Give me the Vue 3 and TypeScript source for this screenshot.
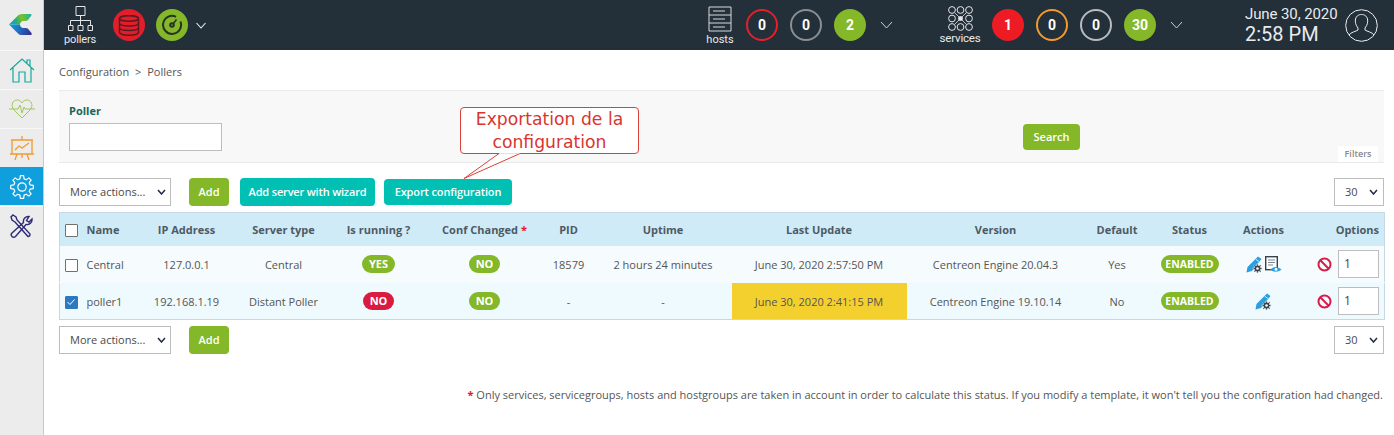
<script setup lang="ts">
interface Row {
  name: string; ip: string; type: string; running: boolean; pid: string; uptime: string;
  update: string; version: string; isDefault: string; checked: boolean; stale: boolean; preview: boolean;
}
const rows: Row[] = [
  { name: 'Central', ip: '127.0.0.1', type: 'Central', running: true, pid: '18579', uptime: '2 hours 24 minutes', update: 'June 30, 2020 2:57:50 PM', version: 'Centreon Engine 20.04.3', isDefault: 'Yes', checked: false, stale: false, preview: true },
  { name: 'poller1', ip: '192.168.1.19', type: 'Distant Poller', running: false, pid: '-', uptime: '-', update: 'June 30, 2020 2:41:15 PM', version: 'Centreon Engine 19.10.14', isDefault: 'No', checked: true, stale: true, preview: false },
]
const cols = [27, 50, 100, 94, 96, 116, 52, 137, 175, 178, 65, 80, 68, 87]
const hostPills = [
  { t: '0', c: 'ring red' }, { t: '0', c: 'ring grey' }, { t: '2', c: 'fill lime' },
]
const servicePills = [
  { t: '1', c: 'fill redf' }, { t: '0', c: 'ring orange' }, { t: '0', c: 'ring light' }, { t: '30', c: 'fill lime' },
]
function gear(cx: number, cy: number, outer: number, inner: number, teeth: number): string {
  const step = (Math.PI * 2) / teeth
  const parts: string[] = []
  for (let i = 0; i < teeth; i++) {
    const a = i * step
    const pts: [number, number][] = [
      [inner, a - step * 0.32], [outer, a - step * 0.18], [outer, a + step * 0.18], [inner, a + step * 0.32],
    ]
    for (const [r, t] of pts) {
      parts.push(`${parts.length ? 'L' : 'M'}${(cx + r * Math.cos(t)).toFixed(2)} ${(cy + r * Math.sin(t)).toFixed(2)}`)
    }
  }
  return parts.join(' ') + ' Z'
}
const navGear = gear(12, 12, 11.4, 8.4, 8)
const smallGear = gear(11.5, 12.5, 4.6, 3.2, 8)
const serviceDots: [number, number][] = []
for (const y of [4, 12.5, 21]) for (const x of [4, 12.5, 21]) if (!(x === 12.5 && y === 12.5)) serviceDots.push([x, y])
</script>

<template>
  <div class="app">
    <aside class="side">
      <div class="logo">
        <svg width="24" height="22" viewBox="0 0 24 22">
          <defs>
            <linearGradient id="logoTop" gradientUnits="userSpaceOnUse" x1="23" y1="2" x2="1" y2="9">
              <stop offset="0" stop-color="#10b4a8" />
              <stop offset="0.45" stop-color="#7fc023" />
              <stop offset="0.72" stop-color="#27b07a" />
              <stop offset="1" stop-color="#0f9fdc" />
            </linearGradient>
            <linearGradient id="logoBottom" gradientUnits="userSpaceOnUse" x1="1" y1="11" x2="22" y2="20">
              <stop offset="0" stop-color="#0f9fdc" />
              <stop offset="0.45" stop-color="#1f6fc0" />
              <stop offset="1" stop-color="#3a2d8c" />
            </linearGradient>
          </defs>
          <path d="M0 10.5 L9 1.5 Q10 0 13 0 L21 0 Q23.5 0 22 2 L19 6 Q18 7 16 7 L14 7 Q11 8 11 10.5 Z" fill="url(#logoTop)" />
          <path d="M0 10.5 L11 10.5 Q11 13 14 14 L17 14 Q19 14 20 16 L22.5 19 Q23.5 21 21 21 L13 21 Q10 21 9 19.5 Z" fill="url(#logoBottom)" />
        </svg>
      </div>
      <div class="nav">
        <svg width="26" height="26" viewBox="0 0 26 26" fill="none" stroke="#17a89d" stroke-width="1.2">
          <path d="M1 13 L13 2 L25 13 M4 11 V25 H10 V15 H16 V25 H22 V11 M18 6 V3 H21 V9" />
        </svg>
      </div>
      <div class="nav">
        <svg width="26" height="22" viewBox="0 0 26 22" fill="none" stroke="#a3c65a" stroke-width="1">
          <path d="M13 20 L5 12 C1 7 4 2 8 2 C10 2 12 3 13 5 C14 3 16 2 18 2 C22 2 25 7 21 12 Z M0 11 H9 L11 7 L13 15 L15 9 L16 11 H26" />
        </svg>
      </div>
      <div class="nav">
        <svg width="24" height="26" viewBox="0 0 24 26" fill="none" stroke="#f29a2e" stroke-width="1.3">
          <path d="M1 5 H23 M2 5 V19 H22 V5 M12 5 V1 M0 19 H24 M7 19 L5 25 M17 19 L19 25 M12 19 V23 M5 15 L9 11 L12 13 L19 8" />
        </svg>
      </div>
      <div class="nav active">
        <svg width="24" height="24" viewBox="0 0 24 24" fill="none" stroke="#fff" stroke-width="1.2">
          <path :d="navGear" stroke-linejoin="round" />
          <circle cx="12" cy="12" r="4.2" />
        </svg>
      </div>
      <div class="nav">
        <svg width="24" height="24" viewBox="0 0 24 24" fill="none" stroke="#2a2a78" stroke-width="1.4">
          <path d="M3 1 L6 3 L7 6 L20 20 A2 2 0 0 1 18 22.5 L5 8 L2 6 L1 3 Z" />
          <path d="M22 5 L19 8 L16.5 6.5 L19 2.5 A5 5 0 0 0 13.5 8.5 L2 19 A2.4 2.4 0 0 0 5.5 22.5 L16 10.5 A5 5 0 0 0 22 5 Z" />
        </svg>
      </div>
    </aside>

    <div class="content">
      <header class="top">
        <div class="group-left">
          <div class="labelled pollers">
            <svg width="25" height="26" viewBox="0 0 25 26" fill="none" stroke="#e4e6e8" stroke-width="1">
              <path d="M8 0.5 H17 V9.5 H8 Z M12.5 9.5 V14.5 M2.5 14.5 H22.5 V19 M2.5 14.5 V19 M12.5 14.5 V19 M0.5 19.5 H5 V24.5 H0.5 Z M10 19.5 H15 V24.5 H10 Z M20 19.5 H24.5 V24.5 H20 Z" />
            </svg>
            <span>pollers</span>
          </div>
          <div class="round db">
            <svg width="22" height="21" viewBox="0 0 22 21" fill="none" stroke="#5a1a22" stroke-width="1.5">
              <ellipse cx="11" cy="3.5" rx="9.5" ry="2.8" />
              <path d="M1.5 3.5 V17 C1.5 19 6 20.2 11 20.2 C16 20.2 20.5 19 20.5 17 V3.5 M1.5 8 C1.5 10 6 11 11 11 C16 11 20.5 10 20.5 8 M1.5 12.5 C1.5 14.5 6 15.5 11 15.5 C16 15.5 20.5 14.5 20.5 12.5" />
            </svg>
          </div>
          <div class="round gauge">
            <svg width="22" height="22" viewBox="0 0 22 22" fill="none" stroke="#263226" stroke-width="2">
              <path d="M15 2.8 A9 9 0 1 0 19.4 7.5" />
              <circle cx="11" cy="11" r="1.8" />
              <path d="M12 10 L15.5 5.5" stroke-width="1.5" />
            </svg>
          </div>
          <svg class="chev first-chev" width="10" height="7" viewBox="0 0 10 7" fill="none" stroke="#f0f1f2" stroke-width="1.1"><path d="M0.5 1 L5 6 L9.5 1" /></svg>
        </div>

        <div class="group-hosts">
          <div class="labelled hosts">
            <svg width="24" height="26" viewBox="0 0 24 26" fill="none" stroke="#d8dadc" stroke-width="1">
              <path d="M1 1 H23 V25 H1 Z M1 9 H23 M1 17 H23 M5 5 H17 M5 13 H17 M5 21 H17" />
            </svg>
            <span>hosts</span>
          </div>
          <div class="pills">
            <span v-for="(p, i) in hostPills" :key="i" class="pill" :class="p.c">{{ p.t }}</span>
          </div>
          <svg class="chev" width="13" height="8" viewBox="0 0 13 8" fill="none" stroke="#cfd2d4" stroke-width="1"><path d="M1 1 L6.5 7 L12 1" /></svg>
        </div>

        <div class="group-services">
          <div class="labelled services">
            <svg width="25" height="25" viewBox="0 0 25 25" fill="none" stroke="#e4e6e8" stroke-width="1">
              <circle v-for="(d, i) in serviceDots" :key="i" :cx="d[0]" :cy="d[1]" r="3.4" />
              <circle cx="12.5" cy="12.5" r="2" fill="#e4e6e8" />
              <path d="M7 7 L18 18 M18 7 L7 18" stroke-width="0.8" />
            </svg>
            <span>services</span>
          </div>
          <div class="pills">
            <span v-for="(p, i) in servicePills" :key="i" class="pill" :class="p.c">{{ p.t }}</span>
          </div>
          <svg class="chev" width="13" height="8" viewBox="0 0 13 8" fill="none" stroke="#cfd2d4" stroke-width="1"><path d="M1 1 L6.5 7 L12 1" /></svg>
        </div>

        <div class="clock">
          <div class="date">June 30, 2020</div>
          <div class="time">2:58 PM</div>
        </div>
        <svg class="user" width="33" height="33" viewBox="0 0 33 33" fill="none" stroke="#eceeef" stroke-width="1">
          <circle cx="16.5" cy="16.5" r="15.8" />
          <path d="M4 26 C6 23 11 22.5 13 21 V19 C10.5 16 10 13 10.5 10 C11.5 6.5 14 5.5 16.5 5.5 C19 5.5 21.5 6.5 22.5 10 C23 13 22.5 16 20 19 V21 C22 22.5 27 23 29 26" />
        </svg>
      </header>

      <main class="page">
        <div class="crumb">Configuration <span class="gt">&gt;</span> Pollers</div>

        <section class="filters">
          <div class="field">
            <label>Poller</label>
            <div class="textbox"></div>
          </div>
          <button class="btn search">Search</button>
          <span class="filters-tab">Filters</span>
        </section>

        <div class="toolbar first">
          <div class="select wide"><span>More actions...</span><svg width="9" height="6" viewBox="0 0 9 6" fill="none" stroke="#1d2b4d" stroke-width="1.5"><path d="M1 1 L4.5 5 L8 1" /></svg></div>
          <button class="btn add">Add</button>
          <button class="btn teal wizard">Add server with wizard</button>
          <button class="btn teal export">Export configuration</button>
          <div class="select small"><span>30</span><svg width="9" height="6" viewBox="0 0 9 6" fill="none" stroke="#1d2b4d" stroke-width="1.5"><path d="M1 1 L4.5 5 L8 1" /></svg></div>
        </div>

        <table class="grid">
          <colgroup><col v-for="(w, i) in cols" :key="i" :style="{ width: w + 'px' }" /></colgroup>
          <thead>
            <tr>
              <th class="chk"><span class="box"></span></th>
              <th class="left">Name</th>
              <th>IP Address</th>
              <th>Server type</th>
              <th>Is running ?</th>
              <th>Conf Changed <i class="star">*</i></th>
              <th>PID</th>
              <th>Uptime</th>
              <th>Last Update</th>
              <th>Version</th>
              <th>Default</th>
              <th>Status</th>
              <th>Actions</th>
              <th class="right">Options</th>
            </tr>
          </thead>
          <tbody>
            <tr v-for="(r, ri) in rows" :key="r.name" :class="ri % 2 ? 'even' : 'odd'">
              <td class="chk">
                <span v-if="!r.checked" class="box"></span>
                <span v-else class="box on">
                  <svg width="10" height="8" viewBox="0 0 10 8" fill="none" stroke="#fff" stroke-width="1"><path d="M1.5 4 L4 6.5 L8.5 1.5" /></svg>
                </span>
              </td>
              <td class="left">{{ r.name }}</td>
              <td>{{ r.ip }}</td>
              <td>{{ r.type }}</td>
              <td><span class="badge" :class="r.running ? 'ok' : 'bad'">{{ r.running ? 'YES' : 'NO' }}</span></td>
              <td><span class="badge ok">NO</span></td>
              <td>{{ r.pid }}</td>
              <td>{{ r.uptime }}</td>
              <td :class="{ stale: r.stale }">{{ r.update }}</td>
              <td>{{ r.version }}</td>
              <td>{{ r.isDefault }}</td>
              <td><span class="badge ok wide-badge">ENABLED</span></td>
              <td class="acts">
                <span class="act-wrap">
                  <svg width="17" height="17" viewBox="0 0 17 17">
                    <path d="M12 0.5 L15.5 3 L6 15 L0.5 16.5 L1.5 11 Z" fill="#2a9fe0" />
                    <path d="M9.8 3.2 L13.2 5.8" stroke="#fff" stroke-width="0.8" />
                    <path :d="smallGear" fill="#37424c" stroke="#fff" stroke-width="0.5" />
                    <circle cx="11.5" cy="12.5" r="1.3" fill="#fff" />
                  </svg>
                  <svg v-if="r.preview" width="17" height="17" viewBox="0 0 17 17">
                    <rect x="0.7" y="0.7" width="11.6" height="13" fill="#fff" stroke="#37424c" stroke-width="1.4" />
                    <path d="M3 4 H10 M3 6.5 H10 M3 9 H8" stroke="#7b858d" stroke-width="1" />
                    <path d="M5.5 13.5 C8 10 13 10 16.5 13.5 C13 16.5 8 16.5 5.5 13.5 Z" fill="#2a9fe0" />
                    <circle cx="11" cy="13.4" r="1.4" fill="#fff" />
                  </svg>
                </span>
              </td>
              <td class="opts">
                <span class="opt-wrap">
                  <svg width="15" height="15" viewBox="0 0 15 15" fill="none" stroke="#d81d48" stroke-width="2"><circle cx="7.5" cy="7.5" r="6" /><path d="M3.3 3.3 L11.7 11.7" /></svg>
                  <span class="num">1</span>
                </span>
              </td>
            </tr>
          </tbody>
        </table>

        <div class="toolbar second">
          <div class="select wide"><span>More actions...</span><svg width="9" height="6" viewBox="0 0 9 6" fill="none" stroke="#1d2b4d" stroke-width="1.5"><path d="M1 1 L4.5 5 L8 1" /></svg></div>
          <button class="btn add">Add</button>
          <div class="select small"><span>30</span><svg width="9" height="6" viewBox="0 0 9 6" fill="none" stroke="#1d2b4d" stroke-width="1.5"><path d="M1 1 L4.5 5 L8 1" /></svg></div>
        </div>

        <p class="note"><i class="star">*</i> Only services, servicegroups, hosts and hostgroups are taken in account in order to calculate this status. If you modify a template, it won't tell you the configuration had changed.</p>

        <div class="callout">
          <span>Exportation de la<br />configuration</span>
          <svg class="tail" width="62" height="28" viewBox="0 0 62 28">
            <path d="M38 1.5 L3 26.5 L59 1.5" fill="#fff" stroke="#d9413c" stroke-width="1" />
            <path d="M38.5 0 H58.5 V1.6 H38.5 Z" fill="#fff" />
          </svg>
        </div>
      </main>
    </div>
  </div>
</template>

<style scoped>
.app { display: flex; width: 1394px; height: 435px; overflow: hidden; font-family: "Open Sans", sans-serif; color: #4d4d4d; font-size: 11px; background: #fff; }
.side { width: 43px; flex: none; background: #ececec; border-right: 1px solid #c8c8c8; display: flex; flex-direction: column; }
.logo { height: 50px; display: flex; align-items: center; justify-content: center; padding-right: 1px; box-sizing: border-box; }
.nav { height: 38px; margin-bottom: 1px; display: flex; align-items: center; justify-content: center; border-top: 1px solid #f8f8f8; box-sizing: border-box; }
.nav.active { background: #0f9fdc; border-top-color: #0f9fdc; }
.content { flex: 1; min-width: 0; display: flex; flex-direction: column; }

.top { height: 50px; flex: none; background: #232f39; color: #e9ebec; display: flex; align-items: center; font-family: Roboto, sans-serif; position: relative; }
.group-left { display: flex; align-items: center; width: 662px; padding-left: 20px; box-sizing: border-box; flex: none; }
.labelled { display: flex; flex-direction: column; align-items: center; font-size: 11.5px; line-height: 11px; flex: none; }
.labelled svg { display: block; margin-bottom: 2px; }
.pollers { width: 32px; font-size: 11px; letter-spacing: -0.15px; }
.hosts { width: 28px; font-size: 11px; }
.services { width: 40px; font-size: 11.5px; letter-spacing: -0.2px; }
.round { width: 32px; height: 32px; border-radius: 50%; display: flex; align-items: center; justify-content: center; flex: none; }
.db { background: #e31e2b; margin-left: 17px; }
.gauge { background: #84b828; margin-left: 11px; }
.chev { flex: none; margin-left: 14px; }
.first-chev { margin-left: 8px; }
.group-hosts { display: flex; align-items: center; flex: none; }
.group-services { display: flex; align-items: center; margin-left: 47px; flex: none; }
.pills { display: flex; gap: 12px; margin-left: 12px; }
.pill { width: 32px; height: 32px; border-radius: 50%; box-sizing: border-box; display: flex; align-items: center; justify-content: center; font-size: 14px; font-weight: 700; color: #fff; }
.ring { border: 2px solid; }
.ring.red { border-color: #e3202c; }
.ring.grey { border-color: #8a8f93; }
.ring.orange { border-color: #f29a2e; }
.ring.light { border-color: #b9bcbf; }
.fill.lime { background: #84b828; }
.fill.redf { background: #ed1c24; }
.clock { margin-left: 62px; width: 100px; flex: none; }
.date { font-size: 15px; line-height: 17px; letter-spacing: -0.1px; }
.time { font-size: 20px; line-height: 22px; }
.user { flex: none; }

.page { flex: 1; position: relative; padding: 0 10px 0 15px; }
.crumb { height: 40px; line-height: 44px; font-size: 11px; color: #555; }
.gt { margin: 0 3px; }
.filters { height: 73px; background: #f8f8f8; border-top: 1px solid #e9e9e9; border-bottom: 1px solid #e9e9e9; box-sizing: border-box; padding: 0 10px; display: flex; align-items: flex-start; position: relative; }
.field { width: 954px; padding-top: 12px; }
.field label { display: block; font-size: 11px; font-weight: 700; color: #14675f; line-height: 16px; margin-bottom: 4px; }
.textbox { width: 153px; height: 28px; background: #fff; border: 1px solid #bdbdbd; box-sizing: border-box; }
.btn { border: none; border-radius: 4px; font-family: "Open Sans", sans-serif; font-size: 11px; font-weight: 600; color: #fff; padding: 0 0 1px; display: block; flex: none; }
.search { margin-top: 33px; width: 57px; height: 26px; background: #84b828; line-height: 24px; }
.filters-tab { position: absolute; right: 6px; bottom: 0; width: 40px; height: 16px; background: #fff; font-size: 9px; font-weight: 600; color: #8a8a8a; text-align: center; line-height: 16px; }

.toolbar { display: flex; align-items: center; height: 28px; }
.toolbar.first { margin-top: 15px; }
.toolbar.second { margin-top: 6px; }
.select { height: 28px; box-sizing: border-box; background: #fff; border: 1px solid #bdbdbd; display: flex; align-items: center; justify-content: space-between; color: #4a4a4a; }
.select span { position: relative; top: -1px; }
.select.wide { width: 112px; padding: 0 4px 0 10px; }
.select.small { width: 50px; padding: 0 5px 0 10px; margin-left: auto; }
.add { background: #84b828; width: 40px; height: 28px; margin-left: 18px; }
.teal { background: #00bfb3; }
.wizard { width: 135px; height: 28px; margin-left: 11px; letter-spacing: -0.17px; }
.export { width: 128px; height: 26px; margin-left: 9px; letter-spacing: -0.13px; }

.grid { width: 1325px; table-layout: fixed; border-collapse: collapse; margin-top: 6px; border: 1px solid #c5d8e4; text-align: center; }
.grid th { height: 33px; padding: 0; background: #d0ebf8; font-weight: 700; color: #4d5a63; font-size: 11px; }
.grid td { height: 36px; padding: 0; color: #555; }
.odd td { background: #f6fbfd; }
.even td { background: #effafe; border-top: 1px solid #f4fbfe; }
.left { text-align: left; }
.right { text-align: right; padding-right: 5px !important; }
.chk { text-align: right; padding-right: 9px !important; }
.box { display: inline-flex; align-items: center; justify-content: center; width: 13px; height: 13px; box-sizing: border-box; border: 1.5px solid #707070; background: #fff; border-radius: 1px; vertical-align: middle; }
.box.on { background: #2e78bd; border-color: #2e78bd; }
.star { color: #e0172c; font-style: normal; font-weight: 700; }
.badge { display: inline-block; height: 18px; line-height: 18px; padding: 0 7px; border-radius: 9px; color: #fff; font-weight: 700; font-size: 11px; vertical-align: middle; }
.badge.ok { background: #84b828; }
.badge.bad { background: #db1a40; }
.wide-badge { font-size: 10.5px; width: 58px; padding: 0; }
.grid td.stale { background: #f4d02e; }
.act-wrap { display: inline-flex; gap: 2px; align-items: center; vertical-align: middle; }
.opt-wrap { display: flex; justify-content: flex-end; align-items: center; gap: 6px; padding-right: 5px; }
.num { width: 41px; height: 28px; box-sizing: border-box; border: 1px solid #bdbdbd; background: #fff; text-align: left; padding-left: 5px; line-height: 26px; font-size: 12px; color: #444; }
.note { margin: 33px 1px 0 0; text-align: right; font-size: 11px; color: #555; line-height: 16px; }

.callout { position: absolute; left: 416px; top: 57px; width: 179px; height: 47px; background: #fff; border: 1.5px solid #d9413c; border-radius: 4px; box-sizing: border-box; text-align: center; font-family: "DejaVu Sans", sans-serif; font-size: 17.2px; line-height: 23px; color: #d9352f; z-index: 2; }
.callout span { position: relative; z-index: 1; display: block; }
.tail { position: absolute; left: 0; top: 44px; }
</style>

<style>
html, body { margin: 0; padding: 0; background: #fff; }
</style>
